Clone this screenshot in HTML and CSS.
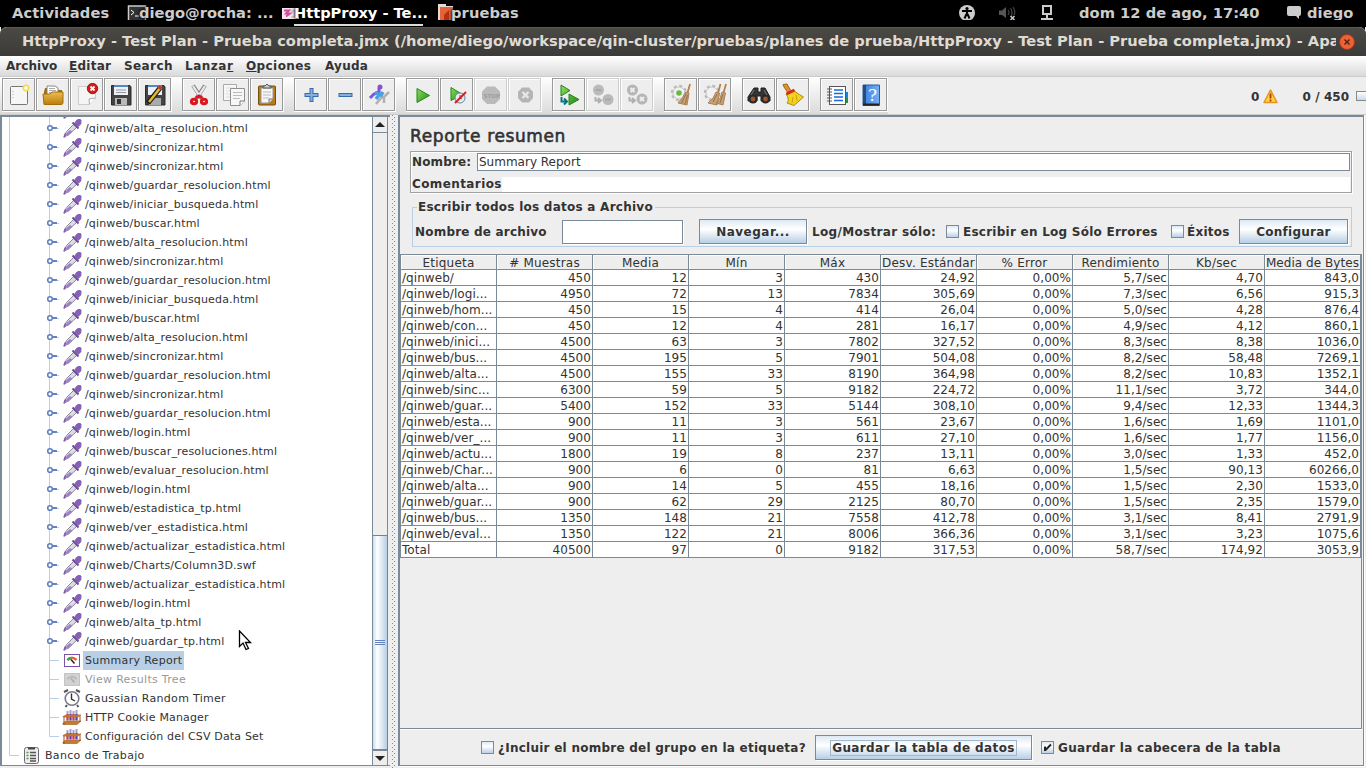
FILE: index.html
```html
<!DOCTYPE html>
<html lang="es">
<head>
<meta charset="utf-8">
<title>HttpProxy - Test Plan</title>
<link rel="stylesheet" href="styles.css">
</head>
<body>
<svg class="defs" width="0" height="0">
  <defs>
    <linearGradient id="gGreen" x1="0" y1="0" x2="1" y2="1"><stop offset="0" stop-color="#8be05c"/><stop offset="1" stop-color="#1f8a12"/></linearGradient>
    <linearGradient id="gGold" x1="0" y1="0" x2="0" y2="1"><stop offset="0" stop-color="#edbd52"/><stop offset="1" stop-color="#b97d0c"/></linearGradient>
    <linearGradient id="gBlue" x1="0" y1="0" x2="1" y2="0"><stop offset="0" stop-color="#3a7fdc"/><stop offset="1" stop-color="#76aef5"/></linearGradient>
    <g id="lines"><path d="M7.500 0V19M47.500 0V19" stroke="#b8cfe5"/></g>
    <g id="dropper">
      <path d="M63 15.500L64.500 12.500 72.500 4.500 75.500 7.500 66.500 16 63 17.500Z" fill="#dcdce4" stroke="#8d8996"/>
      <path d="M63.500 16.500L65 13.500 68 11 70.500 12.800 66 16.500Z" fill="#a07fcc"/>
      <path d="M70.500 3.500L76.500 9.500" stroke="#6d4d99" stroke-width="2"/>
      <path d="M72.500 4.500L74.500 1.500Q77 -.5 79 1L78.800 5 76 7.500Z" fill="#8861b5" stroke="#7f5fb0"/>
      <path d="M62 18.500L63.500 14.500" stroke="#7d5cab" stroke-width="1.700"/>
    </g>
    <g id="node"><use href="#lines"/><path d="M50 9.500H57" stroke="#b8cfe5"/><path d="M50 9H55" stroke="#6382bf" stroke-width="2"/><circle cx="48" cy="9" r="2.300" fill="#fff" stroke="#6382bf" stroke-width="1.600"/><use href="#dropper"/></g>
    <g id="leaf"><use href="#lines"/><path d="M48 9.500H57" stroke="#b8cfe5"/></g>
    <g id="report"><use href="#leaf"/><rect x="62.500" y="3.500" width="15" height="12" fill="#fff" stroke="#7d52ad"/><path d="M65.500 9q4.500-4.500 9 0" fill="none" stroke="#ee5f3a" stroke-width="2.500"/><path d="M65.500 9q1.500-1.700 3.500-2" fill="none" stroke="#35a853" stroke-width="2.500"/><path d="M69 8.500l3.500 4" stroke="#222" stroke-width="1.500"/></g>
    <g id="results"><use href="#leaf"/><rect x="62.500" y="3.500" width="15" height="12" fill="#d2d2d2" stroke="#c4c4c4"/><path d="M65.500 9q4.500-4.500 9 0" fill="none" stroke="#b9b9b9" stroke-width="2"/><path d="M69 8.500l3.500 4" stroke="#aaa" stroke-width="1.500"/></g>
    <g id="timer"><use href="#leaf"/><path d="M62 3l4-2M74 1l4 2M65 16l-1.500 2M75 16l1.500 2" stroke="#555" stroke-width="2"/><circle cx="70" cy="9.500" r="6.800" fill="#fff" stroke="#7d778e" stroke-width="1.600"/><path d="M69.500 4.500V10l3.500 2" fill="none" stroke="#333" stroke-width="1.400"/></g>
    <g id="tubes"><path d="M65.500 3V16M68.500 2V15M71.500 3V16M74.500 2V15" stroke="#a79fc8" stroke-width="2"/><path d="M65.500 6V12M71.500 6V12" stroke="#e22c50" stroke-width="2"/><path d="M68.500 6V12M74.500 6V12" stroke="#453bc5" stroke-width="2"/><path d="M61 8.500L64 7H79L76 9H61ZM61 15L64 13H79L75 16.500H61Z" fill="#c37a37" stroke="#b5702f" stroke-width=".8"/><path d="M62 9V17M78 8V14" stroke="#9d5521"/></g>
    <g id="config"><use href="#leaf"/><use href="#tubes"/></g>
    <g id="lastconfig"><path d="M7.500 0V19M47.500 0V9.500H57" fill="none" stroke="#b8cfe5"/><use href="#tubes"/></g>
    <g id="bench"><path d="M7.500 0V9.500H17" fill="none" stroke="#b8cfe5"/><rect x="22.500" y="1.500" width="14" height="16" rx="2" fill="#eee" stroke="#6c6878"/><path d="M26 2.500h7" stroke="#444" stroke-width="2"/><path d="M28 6.500h6M28 9.500h6M28 12.500h6M28 15h6" stroke="#555" stroke-width="1.400"/><path d="M24.500 6.500h2M24.500 9.500h2M24.500 12.500h2" stroke="#4b9c49" stroke-width="1.500"/></g>
  </defs>
</svg>

<header class="shell">
  <span class="activities">Actividades</span>
  <div class="task t1"><svg width="20" height="20"><rect x="1.500" y="2" width="17" height="16" fill="#333" stroke="#ccc" stroke-width="1.500"/><path d="M4 6l3 2.500L4 11M8 12h4" fill="none" stroke="#fff"/></svg><span>diego@rocha: ...</span></div>
  <div class="task t2"><svg width="20" height="20"><rect x="0" y="4" width="17" height="11" fill="#f0e8f0"/><path d="M2 6.500h5l-3 3h4l-4 3" stroke="#d54b9c" stroke-width="2" fill="none"/><path d="M9 7h5v6h-5" stroke="#e6a05a" fill="none"/></svg><span>HttpProxy - Te...</span></div>
  <div class="task t3"><svg width="20" height="22"><path d="M1 21V1H9V3H16V21" fill="#e8d9d4"/><path d="M3 21V4H16V21" fill="#e36439"/><path d="M7 18V12L12 7V18Z" fill="#bb2e0d"/></svg><span>pruebas</span></div>
  <div class="tray">
    <svg width="16" height="16"><circle cx="8" cy="8" r="8" fill="#ccc"/><circle cx="8" cy="3.500" r="1.600"/><path d="M3 6h10M8 6v4M7.500 9L5.500 13.500M8.500 9l2 4.500" stroke="#000" stroke-width="2"/></svg>
    <svg width="17" height="16"><path d="M0 5.500H3L7 2V13L3 10H0Z" fill="#555"/><path d="M9 5q2 2.500 0 5M11.500 3q3 4.500 0 9M14 2q3 4 1 8" fill="none" stroke="#444" stroke-width="1.200"/><path d="M11.500 11l4 4M15.500 11l-4 4" stroke="#ccc" stroke-width="1.500"/></svg>
    <svg width="14" height="16"><path d="M3 1H11V9H3ZM7 10v4M1 14H13" fill="none" stroke="#ccc" stroke-width="2"/></svg>
  </div>
  <span class="clock">dom 12 de ago, 17:40</span>
  <svg class="chat" width="15" height="14"><path d="M2 0H12Q14 0 14 2V8Q14 10 12 10V13L9 10H2Q0 10 0 8V2Q0 0 2 0Z" fill="#ccc"/></svg>
  <span class="user">diego</span>
</header>

<div class="titlebar"><span class="wintitle">HttpProxy - Test Plan - Prueba completa.jmx (/home/diego/workspace/qin-cluster/pruebas/planes de prueba/HttpProxy - Test Plan - Prueba completa.jmx) - Apache JMeter</span><svg width="18" height="18"><circle cx="9" cy="9" r="7.500" fill="#ee6035" stroke="#9f3b19"/><path d="M6.500 6.500l5 5M11.500 6.500l-5 5" stroke="#45251a" stroke-width="1.400"/></svg></div>

<nav class="menubar"><span class="m1">Archivo</span><span class="m2"><u>E</u>ditar</span><span class="m3">Search</span><span class="m4">Lanza<u>r</u></span><span class="m5"><u>O</u>pciones</span><span>Ayuda</span></nav>

<div class="toolbar">
  <div class="tools">
    <div class="group">
      <div class="btn"><svg viewBox="0 0 24 24"><rect x="3.500" y="3.500" width="17" height="18" rx="1" fill="#f6f6f6" stroke="#777"/><path d="M6 8v9" stroke="#aaa" stroke-dasharray="1 2"/><circle cx="19" cy="5" r="2.700" fill="#fffbd5" stroke="#eedc4d" stroke-width="1.500"/></svg></div>
      <div class="btn"><svg viewBox="0 0 24 24"><path d="M3 9V19H21V7H9L7 5H4Z" fill="#a36c0a"/><path d="M6 11V3H14L17 5V12" fill="#fff" stroke="#888"/><path d="M8 5.500h6M8 7.500h7M8 9.500h7" stroke="#aaa"/><path d="M2 11H9L11 9H22V20L21 21.500H3Z" fill="url(#gGold)" stroke="#a66d08"/></svg></div>
      <div class="btn"><svg viewBox="0 0 24 24"><path d="M3.500 3.500H20.500V15L14.500 21.500H3.500Z" fill="#f5f5f5" stroke="#ccc"/><path d="M20.500 15L14 16 14.500 21.500" fill="#fff" stroke="#aaa"/><circle cx="17.500" cy="5.500" r="5.200" fill="#cf1d1a" stroke="#a31715"/><path d="M15.500 3.500l4 4M19.500 3.500l-4 4" stroke="#fff" stroke-width="1.800"/></svg></div>
      <div class="btn"><svg viewBox="0 0 24 24"><path d="M2.500 2.500H21L22 4V22H2.500Z" fill="#444" stroke="#2c2c2c"/><path d="M5 2H19V12H5Z" fill="#eaf1fa"/><path d="M5 2H19V4H5Z" fill="#5386c6"/><path d="M7 7h10M7 9.500h10" stroke="#999"/><path d="M6 15H18V22H6Z" fill="#b8b8b8"/><path d="M8 16H12V21H8Z" fill="#333"/></svg></div>
      <div class="btn"><svg viewBox="0 0 24 24"><path d="M2.500 2.500H21L22 4V22H2.500Z" fill="#444" stroke="#2c2c2c"/><path d="M5 2H19V12H5Z" fill="#eaf1fa"/><path d="M5 2H19V4H5Z" fill="#5386c6"/><path d="M6 15H18V22H6Z" fill="#aaa"/><path d="M5 20L17 5" stroke="#1c1a13" stroke-width="5"/><path d="M6 19L17.500 4.500" stroke="#e5b834" stroke-width="2.600"/><path d="M16 6L18 3.500" stroke="#c6362d" stroke-width="4"/></svg></div>
    </div>
    <div class="group">
      <div class="btn"><svg viewBox="0 0 24 24"><path d="M6 2.500L15 16M18 2.500L9 16" stroke="#888" stroke-width="4"/><path d="M6 3L14.500 16M18 3L9.500 16" stroke="#ededed" stroke-width="2.200"/><path d="M9 15L12 13L15 15" fill="none" stroke="#d9171d" stroke-width="3"/><ellipse cx="7" cy="18.500" rx="2.600" ry="2.300" fill="#f3d5d5" stroke="#d9171d" stroke-width="3"/><ellipse cx="17" cy="18.500" rx="2.600" ry="2.300" fill="#f3d5d5" stroke="#d9171d" stroke-width="3"/></svg></div>
      <div class="btn"><svg viewBox="0 0 24 24"><path d="M2.500 1.500H15.500V17.500H2.500Z" fill="#f7f7f7" stroke="#aaa"/><path d="M5 5h8M5 8h8M5 11h8M5 14h8" stroke="#ddd"/><path d="M9.500 5.500H23.500V18L19 22.500H9.500Z" fill="#f7f7f7" stroke="#909090"/><path d="M12 9.500h9M12 12.500h9M12 15.500h7" stroke="#bbb"/><path d="M23.500 18L19 18V22.500" fill="#fff" stroke="#777"/></svg></div>
      <div class="btn"><svg viewBox="0 0 24 24"><rect x="3.500" y="3" width="17" height="19" rx="1" fill="#b77b19" stroke="#76500d"/><path d="M6 5H18V16L14 20H6Z" fill="#f7f7f7" stroke="#999"/><path d="M8 9h8M8 12h8M8 15h6" stroke="#bbb"/><path d="M14 20V16H18" fill="#ddd" stroke="#777"/><path d="M8 5V3H10L12 1L14 3H16V5Z" fill="#ccc" stroke="#555"/></svg></div>
    </div>
    <div class="group">
      <div class="btn"><svg viewBox="0 0 24 24"><path d="M12.500 5V19M5.500 12H19.500" stroke="#356aad" stroke-width="4"/><path d="M12.500 6V18M6.500 12H18.500" stroke="#85afdf" stroke-width="2"/></svg></div>
      <div class="btn"><svg viewBox="0 0 24 24"><path d="M5.500 12H19.500" stroke="#356aad" stroke-width="4"/><path d="M6.500 12H18.500" stroke="#85afdf" stroke-width="2"/></svg></div>
      <div class="btn"><svg viewBox="0 0 24 24"><path d="M9 21L14 15L18 13L22 9M17 14L17 20" fill="none" stroke="#b0b0b0" stroke-width="2.500"/><path d="M3 15L7 11L12 9L12 5" fill="none" stroke="#765ad2" stroke-width="3"/><path d="M8 9.500L14 12L16 9M12 12L9 16" fill="none" stroke="#46a0e8" stroke-width="3.500"/><circle cx="13" cy="4" r="2.500" fill="#8750cf"/></svg></div>
    </div>
    <div class="group">
      <div class="btn"><svg viewBox="0 0 24 24"><path d="M6 5.500V19.500L18.500 12.500Z" fill="url(#gGreen)" stroke="#27831d"/></svg></div>
      <div class="btn"><svg viewBox="0 0 24 24"><path d="M6 4.500V17.500L17.500 11.500Z" fill="url(#gGreen)" stroke="#27831d"/><circle cx="15" cy="15" r="5" fill="#e5edf5" stroke="#65869e"/><path d="M15 12v3l2 1" fill="none" stroke="#555"/><path d="M10 20L21 9" stroke="#d32020" stroke-width="2"/></svg></div>
      <div class="btn off"><svg viewBox="0 0 24 24"><path d="M8 3.500H16L21 8.500V16L16 21H8L3 16V8.500Z" fill="#bababa"/><text x="4.500" y="15" class="stop">STOP</text></svg></div>
      <div class="btn off"><svg viewBox="0 0 24 24"><path d="M9 4.500H16L20 9V15L16 19.500H9L5 15V9Z" fill="#b5b5b5"/><path d="M9.500 9l6 6M15.500 9l-6 6" stroke="#e7e7e7" stroke-width="2.400"/></svg></div>
    </div>
    <div class="group">
      <div class="btn"><svg viewBox="0 0 24 24"><path d="M4 2V13L13 7.500ZM12 11V22L22 16.500Z" fill="url(#gGreen)" stroke="#27831d"/><path d="M4.500 14V18.500H9M7 15.500L10 18.500L7 21.500" fill="none" stroke="#087583" stroke-width="2"/></svg></div>
      <div class="btn off"><svg viewBox="0 0 24 24"><circle cx="7.500" cy="7" r="5.500" fill="#bababa"/><circle cx="17" cy="16.500" r="5.500" fill="#bababa"/><path d="M4.500 7h6M14 16.500h6" stroke="#a9a9a9" stroke-width="2"/><path d="M4.500 14V17.500H9M7 15L10 17.500L7 20" fill="none" stroke="#b0b0b0" stroke-width="2"/></svg></div>
      <div class="btn off"><svg viewBox="0 0 24 24"><circle cx="7.500" cy="7" r="5.500" fill="#b5b5b5"/><circle cx="17" cy="16" r="5.500" fill="#b5b5b5"/><path d="M5.500 5l4 4M9.500 5L5.500 9M15 14l4 4M19 14l-4 4" stroke="#eee" stroke-width="2"/><path d="M4.500 14V17.500H9M7 15L10 17.500L7 20" fill="none" stroke="#b0b0b0" stroke-width="2"/></svg></div>
    </div>
    <div class="group">
      <div class="btn"><svg viewBox="0 0 24 24"><circle cx="10" cy="10" r="7" fill="#eee" stroke="#bbb" stroke-width="2.500" stroke-dasharray="3 2.500"/><circle cx="10" cy="10" r="6" fill="#f1f1f1" stroke="#c5c5c5"/><circle cx="10" cy="10" r="2.800" fill="#68b944"/><path d="M21 1L18.500 10" stroke="#b08350" stroke-width="1.800"/><path d="M16.500 9L20 10L18 22L9 20Q14 15 16.500 9Z" fill="#c9a06f" stroke="#a8805a"/><path d="M12.500 20L17 11M16 21L18.500 12" stroke="#94704c"/></svg></div>
      <div class="btn"><svg viewBox="0 0 24 24"><circle cx="9" cy="10" r="7" fill="#eee" stroke="#bbb" stroke-width="2.500" stroke-dasharray="3 2.500"/><circle cx="9" cy="10" r="6" fill="#f1f1f1" stroke="#c5c5c5"/><path d="M17.500 1L15 10M23 1L20.500 10" stroke="#b08350" stroke-width="1.800"/><path d="M13 9L16.500 10L14 22L5 20Q11 16 13 9ZM19 9L22.500 10L20 22L13 20Q18 16 19 9Z" fill="#c9a06f" stroke="#a8805a"/><path d="M10 19L14 11M17 20L20 11" stroke="#94704c"/></svg></div>
    </div>
    <div class="group">
      <div class="btn"><svg viewBox="0 0 24 24"><path d="M7 5H11V9H14V5H18L23 14V18H14V13H10V18H1V14Z" fill="#343434" stroke="#222"/><circle cx="6" cy="16" r="4.600" fill="#292929"/><circle cx="18.500" cy="16" r="4.600" fill="#292929"/><circle cx="6" cy="16" r="2.400" fill="#9b572f"/><circle cx="18.500" cy="16" r="2.400" fill="#9b572f"/><path d="M7 7L4 12M17 7L20 12" stroke="#777"/></svg></div>
      <div class="btn"><svg viewBox="0 0 24 24"><path d="M2 1.500L6 1L10 8L7 10L3 4Z" fill="#d9922e" stroke="#a36614"/><path d="M5 11L13 8Q19 12 22.500 14L13 22.500L6 20Q9 17 5 11Z" fill="#f4d21f" stroke="#b08c0d"/><path d="M5.500 11L13.500 7" stroke="#d52920" stroke-width="3"/><path d="M11 20L12 14M16 18L15 12" stroke="#c6a410"/></svg></div>
    </div>
    <div class="group">
      <div class="btn"><svg viewBox="0 0 24 24"><path d="M19 9H23V15H19Z" fill="#1482ed"/><path d="M19 15H23V20H19Z" fill="#27913a"/><rect x="4.500" y="3.500" width="16" height="18" fill="#fff" stroke="#555"/><path d="M9 7H18M9 10.500H18M9 14H18M9 17.500H18" stroke="#1769db" stroke-width="1.500"/><path d="M2 6h5M2 9h5M2 12h5M2 15h5M2 18h5" stroke="#555" stroke-width="1.200"/></svg></div>
      <div class="btn"><svg viewBox="0 0 24 24"><path d="M4 2H20.500V22.500H4Z" fill="url(#gBlue)" stroke="#245aa2"/><path d="M4 2H7V22H4Z" fill="#234c83"/><path d="M4 21.500H20" stroke="#222" stroke-width="2"/><text x="9" y="18" class="qmark">?</text></svg></div>
    </div>
  </div>
  <div class="status"><span>0</span><svg width="15" height="15"><path d="M7.500 1L14 13.500H1Z" fill="#ffd43c" stroke="#e79222" stroke-width="1.500" stroke-linejoin="round"/><path d="M7.500 4.500V9.500M7.500 10.500v2" stroke="#a33e14" stroke-width="1.800"/></svg><span class="count">0 / 450</span><i class="lamp"></i></div>
</div>

<main class="split">
  <aside class="treepane">
    <div class="tree">
      <div class="row head"><svg><use href="#node"/></svg></div>
      <div class="row"><svg><use href="#node"/></svg><span>/qinweb/alta_resolucion.html</span></div>
      <div class="row"><svg><use href="#node"/></svg><span>/qinweb/sincronizar.html</span></div>
      <div class="row"><svg><use href="#node"/></svg><span>/qinweb/sincronizar.html</span></div>
      <div class="row"><svg><use href="#node"/></svg><span>/qinweb/guardar_resolucion.html</span></div>
      <div class="row"><svg><use href="#node"/></svg><span>/qinweb/iniciar_busqueda.html</span></div>
      <div class="row"><svg><use href="#node"/></svg><span>/qinweb/buscar.html</span></div>
      <div class="row"><svg><use href="#node"/></svg><span>/qinweb/alta_resolucion.html</span></div>
      <div class="row"><svg><use href="#node"/></svg><span>/qinweb/sincronizar.html</span></div>
      <div class="row"><svg><use href="#node"/></svg><span>/qinweb/guardar_resolucion.html</span></div>
      <div class="row"><svg><use href="#node"/></svg><span>/qinweb/iniciar_busqueda.html</span></div>
      <div class="row"><svg><use href="#node"/></svg><span>/qinweb/buscar.html</span></div>
      <div class="row"><svg><use href="#node"/></svg><span>/qinweb/alta_resolucion.html</span></div>
      <div class="row"><svg><use href="#node"/></svg><span>/qinweb/sincronizar.html</span></div>
      <div class="row"><svg><use href="#node"/></svg><span>/qinweb/guardar_resolucion.html</span></div>
      <div class="row"><svg><use href="#node"/></svg><span>/qinweb/sincronizar.html</span></div>
      <div class="row"><svg><use href="#node"/></svg><span>/qinweb/guardar_resolucion.html</span></div>
      <div class="row"><svg><use href="#node"/></svg><span>/qinweb/login.html</span></div>
      <div class="row"><svg><use href="#node"/></svg><span>/qinweb/buscar_resoluciones.html</span></div>
      <div class="row"><svg><use href="#node"/></svg><span>/qinweb/evaluar_resolucion.html</span></div>
      <div class="row"><svg><use href="#node"/></svg><span>/qinweb/login.html</span></div>
      <div class="row"><svg><use href="#node"/></svg><span>/qinweb/estadistica_tp.html</span></div>
      <div class="row"><svg><use href="#node"/></svg><span>/qinweb/ver_estadistica.html</span></div>
      <div class="row"><svg><use href="#node"/></svg><span>/qinweb/actualizar_estadistica.html</span></div>
      <div class="row"><svg><use href="#node"/></svg><span>/qinweb/Charts/Column3D.swf</span></div>
      <div class="row"><svg><use href="#node"/></svg><span>/qinweb/actualizar_estadistica.html</span></div>
      <div class="row"><svg><use href="#node"/></svg><span>/qinweb/login.html</span></div>
      <div class="row"><svg><use href="#node"/></svg><span>/qinweb/alta_tp.html</span></div>
      <div class="row"><svg><use href="#node"/></svg><span>/qinweb/guardar_tp.html</span></div>
      <div class="row wide sel"><svg><use href="#report"/></svg><span>Summary Report</span></div>
      <div class="row wide dis"><svg><use href="#results"/></svg><span>View Results Tree</span></div>
      <div class="row wide"><svg><use href="#timer"/></svg><span>Gaussian Random Timer</span></div>
      <div class="row"><svg><use href="#config"/></svg><span>HTTP Cookie Manager</span></div>
      <div class="row"><svg><use href="#lastconfig"/></svg><span>Configuración del CSV Data Set</span></div>
      <div class="row wide bench"><svg><use href="#bench"/></svg><span>Banco de Trabajo</span></div>
    </div>
    <div class="scroll">
      <div class="arrow"><svg width="10" height="5"><path d="M0 5L5 0L10 5Z" fill="#222"/></svg></div>
      <div class="track"></div>
      <div class="thumb"><i></i><i></i><i></i></div>
      <div class="arrow down"><svg width="10" height="5"><path d="M0 0H10L5 5Z" fill="#222"/></svg></div>
    </div>
  </aside>
  <div class="divider"></div>
  <section class="panel">
    <h1>Reporte resumen</h1>
    <div class="namebox">
      <div class="namerow"><label>Nombre:</label><div class="field">Summary Report</div></div>
      <div class="comrow"><label>Comentarios</label><div class="plain"></div></div>
    </div>
    <fieldset class="filebox">
      <legend>Escribir todos los datos a Archivo</legend>
      <div class="filerow">
        <label class="lfile">Nombre de archivo</label><div class="filefield"></div>
        <div class="button nav">Navegar...</div>
        <span class="llog">Log/Mostrar sólo:</span>
        <i class="check"></i><span class="lerr">Escribir en Log Sólo Errores</span>
        <i class="check"></i><span class="lok">Éxitos</span>
        <div class="button conf">Configurar</div>
      </div>
    </fieldset>
    <div class="tablepane">
      <table>
        <thead><tr><th>Etiqueta</th><th># Muestras</th><th>Media</th><th>Mín</th><th>Máx</th><th>Desv. Estándar</th><th>% Error</th><th>Rendimiento</th><th>Kb/sec</th><th class="full">Media de Bytes</th></tr></thead>
        <tbody>
          <tr><td>/qinweb/</td><td>450</td><td>12</td><td>3</td><td>430</td><td>24,92</td><td>0,00%</td><td>5,7/sec</td><td>4,70</td><td>843,0</td></tr>
          <tr><td>/qinweb/logi...</td><td>4950</td><td>72</td><td>13</td><td>7834</td><td>305,69</td><td>0,00%</td><td>7,3/sec</td><td>6,56</td><td>915,3</td></tr>
          <tr><td>/qinweb/hom...</td><td>450</td><td>15</td><td>4</td><td>414</td><td>26,04</td><td>0,00%</td><td>5,0/sec</td><td>4,28</td><td>876,4</td></tr>
          <tr><td>/qinweb/con...</td><td>450</td><td>12</td><td>4</td><td>281</td><td>16,17</td><td>0,00%</td><td>4,9/sec</td><td>4,12</td><td>860,1</td></tr>
          <tr><td>/qinweb/inici...</td><td>4500</td><td>63</td><td>3</td><td>7802</td><td>327,52</td><td>0,00%</td><td>8,3/sec</td><td>8,38</td><td>1036,0</td></tr>
          <tr><td>/qinweb/bus...</td><td>4500</td><td>195</td><td>5</td><td>7901</td><td>504,08</td><td>0,00%</td><td>8,2/sec</td><td>58,48</td><td>7269,1</td></tr>
          <tr><td>/qinweb/alta...</td><td>4500</td><td>155</td><td>33</td><td>8190</td><td>364,98</td><td>0,00%</td><td>8,2/sec</td><td>10,83</td><td>1352,1</td></tr>
          <tr><td>/qinweb/sinc...</td><td>6300</td><td>59</td><td>5</td><td>9182</td><td>224,72</td><td>0,00%</td><td>11,1/sec</td><td>3,72</td><td>344,0</td></tr>
          <tr><td>/qinweb/guar...</td><td>5400</td><td>152</td><td>33</td><td>5144</td><td>308,10</td><td>0,00%</td><td>9,4/sec</td><td>12,33</td><td>1344,3</td></tr>
          <tr><td>/qinweb/esta...</td><td>900</td><td>11</td><td>3</td><td>561</td><td>23,67</td><td>0,00%</td><td>1,6/sec</td><td>1,69</td><td>1101,0</td></tr>
          <tr><td>/qinweb/ver_...</td><td>900</td><td>11</td><td>3</td><td>611</td><td>27,10</td><td>0,00%</td><td>1,6/sec</td><td>1,77</td><td>1156,0</td></tr>
          <tr><td>/qinweb/actu...</td><td>1800</td><td>19</td><td>8</td><td>237</td><td>13,11</td><td>0,00%</td><td>3,0/sec</td><td>1,33</td><td>452,0</td></tr>
          <tr><td>/qinweb/Char...</td><td>900</td><td>6</td><td>0</td><td>81</td><td>6,63</td><td>0,00%</td><td>1,5/sec</td><td>90,13</td><td>60266,0</td></tr>
          <tr><td>/qinweb/alta...</td><td>900</td><td>14</td><td>5</td><td>455</td><td>18,16</td><td>0,00%</td><td>1,5/sec</td><td>2,30</td><td>1533,0</td></tr>
          <tr><td>/qinweb/guar...</td><td>900</td><td>62</td><td>29</td><td>2125</td><td>80,70</td><td>0,00%</td><td>1,5/sec</td><td>2,35</td><td>1579,0</td></tr>
          <tr><td>/qinweb/bus...</td><td>1350</td><td>148</td><td>21</td><td>7558</td><td>412,78</td><td>0,00%</td><td>3,1/sec</td><td>8,41</td><td>2791,9</td></tr>
          <tr><td>/qinweb/eval...</td><td>1350</td><td>122</td><td>21</td><td>8006</td><td>366,36</td><td>0,00%</td><td>3,1/sec</td><td>3,23</td><td>1075,6</td></tr>
          <tr><td>Total</td><td>40500</td><td>97</td><td>0</td><td>9182</td><td>317,53</td><td>0,00%</td><td>58,7/sec</td><td>174,92</td><td>3053,9</td></tr>
        </tbody>
      </table>
    </div>
    <div class="actions">
      <i class="check"></i><span class="linc">¿Incluir el nombre del grupo en la etiqueta?</span>
      <div class="button save"><span>Guardar la tabla de datos</span></div>
      <i class="check"><svg width="11" height="11"><path d="M3 4.500V9M3.500 8L9 2.500" stroke="#222" stroke-width="2" fill="none"/></svg></i><span class="lcab">Guardar la cabecera de la tabla</span>
    </div>
  </section>
</main>
<svg class="cursor" width="16" height="22"><path d="M1.500 1V16.500L5 13L8 19.500L10.500 18.500L7.500 12.500H12.500Z" fill="#fff" stroke="#000" stroke-width="1.300"/></svg>
</body>
</html>
```
FILE: styles.css
```css
* { box-sizing: border-box; }
html, body { margin: 0; width: 1366px; height: 768px; overflow: hidden; }
body { background: #eee; color: #333; font: bold 12px/14px "DejaVu Sans", sans-serif; letter-spacing: .25px; white-space: nowrap; display: flex; flex-direction: column; }
.defs { position: absolute; }
svg { display: block; flex: none; }

.shell { height: 27px; flex: none; background: #000; color: #ccc; font-size: 14.67px; line-height: 26px; letter-spacing: 0; display: flex; }
.activities { width: 115px; padding-left: 12px; letter-spacing: .1px; }
.task { display: flex; }
.task svg { margin: 4px -8px 0 0; }
.task span { position: relative; text-shadow: 0 0 3px #000, 0 0 3px #000; }
.t1 { width: 155px; padding-left: 12px; }
.t2 { width: 164px; padding-left: 12px; color: #fff; letter-spacing: -.05px; }
.t2 span { height: 26px; background: linear-gradient(#ddd, #ddd) 0 100%/129px 2px no-repeat; }
.t3 { padding-left: 3px; width: 110px; letter-spacing: .1px; }
.t3 svg { margin-top: 3px; margin-right: -6px; }
.tray { margin-left: auto; display: flex; gap: 24px; padding-top: 5px; width: 120px; }
.clock { width: 208px; letter-spacing: .04px; }
.chat { margin-top: 6px; }
.user { width: 64px; padding-left: 5px; letter-spacing: .1px; }

.titlebar { height: 29px; flex: none; background: linear-gradient(#4b4944, #3c3b37); border-top: 1px solid #5b5a54; color: #dfdbd2; font-size: 14.67px; line-height: 26px; letter-spacing: 0; padding: 0 10px 0 22px; display: flex; border-radius: 7px 7px 0 0; box-shadow: 0 -8px 0 -1px #000; }
.wintitle { width: 1314px; overflow: hidden; }
.titlebar svg { margin-top: 5px; margin-left: 2px; }

.menubar { height: 21px; flex: none; background: linear-gradient(#fff, #dadada); border-bottom: 1px solid #ccc; display: flex; padding: 3px 0 0 6px; }
.m1 { width: 63px; letter-spacing: .05px; }
.m2 { width: 55px; }
.m3 { width: 61px; letter-spacing: .4px; }
.m4 { width: 61px; letter-spacing: .5px; }
.m5 { width: 79px; letter-spacing: .4px; }

.toolbar { height: 38px; flex: none; border-bottom: 1px solid #ccc; display: flex; }
.tools { width: 890px; background: linear-gradient(#fff, #dadada); display: flex; gap: 10px; padding: 1px 0 0 2px; }
.group { display: flex; height: 34px; background: #fff; }
.btn { width: 33px; height: 33px; margin-right: 1px; border: 1px solid #999; box-shadow: inset 1px 1px #fff; background: #eee; padding: 4px; }
.btn svg { width: 24px; height: 24px; }
.btn.off { border-color: #ccc; }
.qmark { font: 17px "DejaVu Serif", serif; fill: #fff; }
.stop { font: bold 5.5px "DejaVu Sans", sans-serif; letter-spacing: 0; fill: #9d9d9d; }
.status { display: flex; flex: 1; padding: 13px 0 0 363px; }
.status svg { margin: -1px 0 0 3px; }
.count { width: 53px; margin-left: 25px; letter-spacing: .05px; }
.lamp { width: 12px; height: 10px; flex: none; margin-top: 1px; border: 1px solid #888; background: linear-gradient(#fff, #c8d9ea); }

.split { height: 653px; flex: none; display: flex; }
.treepane { width: 390px; height: 651px; border: solid #7a8a99; border-width: 2px 0 1px 2px; background: #fff; display: flex; }
.tree { width: 370px; height: 648px; overflow: hidden; font-weight: normal; font-size: 11px; line-height: 19px; letter-spacing: .16px; }
.row { height: 19px; display: flex; }
.row.head { margin-top: -17px; }
.row svg { width: 81px; height: 19px; overflow: visible; }
.row span { padding: 0 2px; height: 19px; }
.row.wide { letter-spacing: .31px; }
.sel span { background: #b8cfe5; }
.dis span { color: #999; }
.row.bench svg { width: 41px; }
.scroll { width: 18px; border-left: 1px solid #7a8a99; border-right: 2px solid #eee; display: flex; flex-direction: column; }
.arrow { height: 16px; background: #eee; border-right: 1px solid #7a8a99; border-bottom: 1px solid #7a8a99; padding: 5px 0 0 2px; }
.down { height: 15px; border-top: 1px solid #7a8a99; border-bottom: 0; }
.track { height: 402px; background: #eee; border-right: 1px solid #7a8a99; }
.thumb { flex: 1; border: 1px solid #6382bf; border-left: 0; background: linear-gradient(90deg, #c8ddf2, #fff 30%, #b8cfe5); display: flex; flex-direction: column; align-items: center; gap: 1px; padding-top: 104px; }
.thumb i { width: 10px; height: 1px; background: #6382bf; }
.divider { width: 8px; background: conic-gradient(from 0deg at 1px 1px, transparent 270deg, #888 0) 0 0/4px 4px, conic-gradient(from 0deg at 1px 1px, transparent 270deg, #888 0) 2px 2px/4px 4px, #eee; border: solid #eee; border-width: 0 2px; }

.panel { width: 966px; height: 651px; border: solid #7a8a99; border-width: 2px 1px 1px 2px; box-shadow: 1px 1px #fff; display: flex; flex-direction: column; padding-right: 1px; }
.panel > * { flex: none; }
h1 { font-size: 17px; line-height: 20px; font-weight: normal; -webkit-text-stroke: .6px #333; letter-spacing: .62px; margin: 9px 0 5px 10px; }
.namebox { margin-left: 10px; width: 942px; height: 42px; border: 1px solid #a0a0a0; box-shadow: inset 1px 1px #fff, 1px 1px #fff; padding: 1px; }
.namerow { display: flex; height: 24px; }
.namerow label { width: 65px; padding-top: 2px; letter-spacing: .15px; }
.field { flex: 1; height: 18px; background: #fff; border: 1px solid #7a8a99; font-weight: normal; letter-spacing: 0; padding: 1px; }
.comrow { display: flex; height: 15px; }
.comrow label { width: 90px; letter-spacing: .4px; }
.plain { flex: 1; background: #fff; }
.filebox { margin: 7px 0 0 12px; width: 940px; height: 47px; border: 1px solid #b8cfe5; padding: 0; min-width: 0; }
legend { padding: 0 1px; margin-left: 4px; width: 238px; }
.filerow { display: flex; align-items: center; height: 25px; margin-top: 5px; padding-left: 2px; }
.lfile { width: 147px; letter-spacing: .2px; }
.filefield { width: 121px; height: 24px; background: #fff; border: 1px solid #7a8a99; box-shadow: 1px 1px #fff; }
.button { height: 25px; border: 1px solid #7a8a99; background: linear-gradient(#dde8f3, #fff 40%, #b8cfe5); box-shadow: 1px 1px #fff; text-align: center; line-height: 24px; }
.nav { width: 108px; margin-left: 16px; margin-right: 5px; letter-spacing: .5px; }
.llog { width: 134px; letter-spacing: .33px; }
.check { width: 13px; height: 13px; border: 1px solid #7a8a99; background: linear-gradient(#dde8f3, #fff 40%, #b8cfe5); flex: none; }
.lerr { width: 208px; margin-left: 4px; }
.lok { width: 52px; margin-left: 3px; }
.conf { width: 109px; }
.tablepane { margin-top: 7px; height: 475px; width: 962px; border: solid #7a8a99; border-width: 0 1px 1px 0; box-shadow: 0 1px #fff; }
table { table-layout: fixed; width: 961px; border-collapse: collapse; font-weight: normal; line-height: 12px; letter-spacing: .06px; }
th, td { border: 1px solid #7a8a99; padding: 2px 1px 0 0; height: 16px; text-align: right; vertical-align: top; background: #fff; }
th { font-weight: normal; text-align: center; background: #eee; height: 15px; line-height: 11px; padding: 3px 0 0; box-shadow: inset 1px 1px #fff; letter-spacing: .2px; }
th.full { letter-spacing: .05px; }
td:first-child { text-align: left; padding-left: 1px; }
.actions { display: flex; align-items: center; height: 36px; padding: 1px 0 0 81px; }
.linc { width: 321px; padding-left: 4px; }
.save { width: 217px; margin-right: 9px; letter-spacing: .38px; }
.save span { border: 1px solid #a3b8cc; padding: 0 1px; }
.lcab { padding-left: 4px; letter-spacing: .32px; }
.cursor { position: absolute; left: 238px; top: 630px; }
```
